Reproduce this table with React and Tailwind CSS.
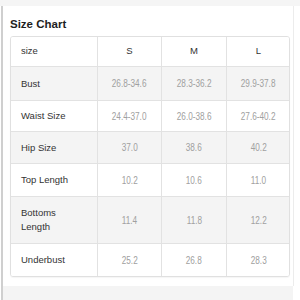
const rows = [
  { label: 'Bust', s: '26.8-34.6', m: '28.3-36.2', l: '29.9-37.8', h: 'h-[34px]', alt: true },
  { label: 'Waist Size', s: '24.4-37.0', m: '26.0-38.6', l: '27.6-40.2', h: 'h-[31px]', alt: false },
  { label: 'Hip Size', s: '37.0', m: '38.6', l: '40.2', h: 'h-[32px]', alt: true },
  { label: 'Top Length', s: '10.2', m: '10.6', l: '11.0', h: 'h-[33px]', alt: false },
  { label: 'Bottoms Length', s: '11.4', m: '11.8', l: '12.2', h: 'h-[47px]', alt: true },
  { label: 'Underbust', s: '25.2', m: '26.8', l: '28.3', h: 'h-[32px]', alt: false },
];

function Val({ children, divider }) {
  return (
    <div className={`flex items-center justify-center ${divider ? 'border-r border-[#e2e2e2]' : ''}`}>
      <span className="inline-block text-[10px] text-[#a0a0a0] scale-x-[0.82]">{children}</span>
    </div>
  );
}

function Row({ row, last }) {
  const bg = row.alt ? 'bg-[#f4f4f4]' : 'bg-white';
  const bottom = last ? '' : 'border-b border-[#e2e2e2]';
  return (
    <div className={`grid grid-cols-[87px_64px_65px_63px] ${row.h} ${bg} ${bottom}`}>
      <div className="flex items-center pl-[10px] pr-2 border-r border-[#e2e2e2] text-[9.5px] leading-[14px] text-[#333]">
        {row.label === 'Bottoms Length' ? (
          <span>Bottoms<br />Length</span>
        ) : (
          row.label
        )}
      </div>
      <Val divider>{row.s}</Val>
      <Val divider>{row.m}</Val>
      <Val>{row.l}</Val>
    </div>
  );
}

export default function App() {
  return (
    <div className="w-[300px] h-[300px] bg-white flex flex-col overflow-hidden" style={{ fontFamily: '"Liberation Sans", Arial, sans-serif' }}>
      <div className="h-[6px] bg-[#f5f5f5] shrink-0" />
      <div className="flex flex-1 min-h-0">
        <div className="w-px shrink-0" />
        <div className="w-[2px] bg-[#cfcfcf] shrink-0" />
        <div className="flex-1 flex flex-col">
          <div className="flex-1 pl-[7px] pr-[3px]">
            <h1 className="mt-[11px] text-[11.5px] leading-[14px] font-bold text-[#1e1e1e]">Size Chart</h1>
            <div className="mt-[5px] w-[280px] border border-[#e0e0e0] rounded-[3px] overflow-hidden shadow-[0_1px_1px_rgba(0,0,0,0.04)]">
              <div className="grid grid-cols-[87px_64px_65px_63px] h-[30px] bg-white border-b border-[#e2e2e2] text-[9.5px] text-[#333]">
                <div className="flex items-center pl-[10px] border-r border-[#e2e2e2]">size</div>
                <div className="flex items-center justify-center border-r border-[#e2e2e2]">S</div>
                <div className="flex items-center justify-center border-r border-[#e2e2e2]">M</div>
                <div className="flex items-center justify-center">L</div>
              </div>
              {rows.map((r, i) => (
                <Row key={r.label} row={r} last={i === rows.length - 1} />
              ))}
            </div>
          </div>
          <div className="h-[14px] bg-[#f4f4f4] shrink-0" />
        </div>
        <div className="w-px bg-[#ececec] shrink-0 mb-[14px]" />
        <div className="w-[7px] shrink-0" />
      </div>
    </div>
  );
}
